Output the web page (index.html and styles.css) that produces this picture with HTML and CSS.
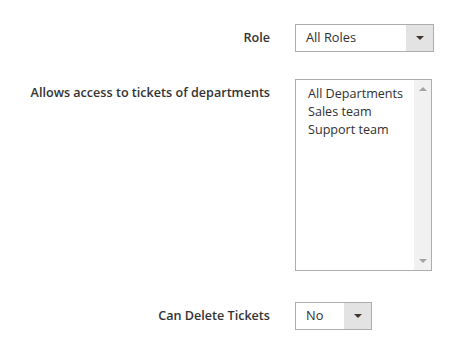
FILE: index.html
```html
<!DOCTYPE html>
<html>
<head>
<meta charset="utf-8">
<link rel="stylesheet" href="styles.css">
</head>
<body>
<div class="form">
  <div class="row row-role">
    <div class="label">Role</div>
    <div class="select select-wide">
      <span class="value">All Roles</span>
      <span class="arrow"><span class="tri"></span></span>
    </div>
  </div>
  <div class="row row-depts">
    <div class="label">Allows access to tickets of departments</div>
    <div class="listbox">
      <div class="options">
        <div class="opt">All Departments</div>
        <div class="opt">Sales team</div>
        <div class="opt">Support team</div>
      </div>
      <div class="scroll">
        <span class="sc-up"></span>
        <span class="sc-down"></span>
      </div>
    </div>
  </div>
  <div class="row row-delete">
    <div class="label">Can Delete Tickets</div>
    <div class="select select-narrow">
      <span class="value">No</span>
      <span class="arrow"><span class="tri"></span></span>
    </div>
  </div>
</div>
</body>
</html>
```
FILE: styles.css
```css
html, body {
  margin: 0;
  padding: 0;
  background: #ffffff;
}
body {
  font-family: "Open Sans", "DejaVu Sans", sans-serif;
  color: #303030;
  font-size: 13px;
}
.form {
  display: flex;
  flex-direction: column;
  padding-top: 24px;
}
.row {
  display: grid;
  grid-template-columns: 270px auto;
  column-gap: 25px;
  align-items: start;
}
.label {
  text-align: right;
  font-weight: 600;
  font-size: 12.6px;
  line-height: 18px;
  color: #333333;
}
.row-role .label { padding-top: 5px; }
.row-depts { margin-top: 27px; }
.row-depts .label { padding-top: 5px; }
.row-delete { margin-top: 31px; }
.row-delete .label { padding-top: 5px; }

.select {
  display: flex;
  height: 28px;
  box-sizing: border-box;
  border: 1px solid #adadad;
  background: #fff;
}
.select-wide { width: 139px; }
.select-narrow { width: 77px; }
.select .value {
  flex: 1;
  padding-left: 10px;
  line-height: 25px;
  font-size: 12.8px;
  color: #303030;
}
.select .arrow {
  width: 27px;
  background: #e3e3e3;
  display: flex;
  align-items: center;
  justify-content: center;
}
.tri {
  width: 0;
  height: 0;
  border-left: 4px solid transparent;
  border-right: 4px solid transparent;
  border-top: 4px solid #41362f;
}

.listbox {
  display: flex;
  width: 137px;
  height: 192px;
  box-sizing: border-box;
  border: 1px solid #adadad;
  background: #fff;
}
.options {
  flex: 1;
  padding: 5px 0 0 12px;
}
.opt {
  font-size: 12.6px;
  line-height: 18px;
  color: #303030;
}
.scroll {
  width: 17px;
  background: #f1f1f1;
  display: flex;
  flex-direction: column;
  justify-content: space-between;
  align-items: center;
  padding: 7px 0;
}
.sc-up {
  width: 0;
  height: 0;
  border-left: 4px solid transparent;
  border-right: 4px solid transparent;
  border-bottom: 4px solid #a3a3a3;
}
.sc-down {
  width: 0;
  height: 0;
  border-left: 4px solid transparent;
  border-right: 4px solid transparent;
  border-top: 4px solid #a3a3a3;
}
```
